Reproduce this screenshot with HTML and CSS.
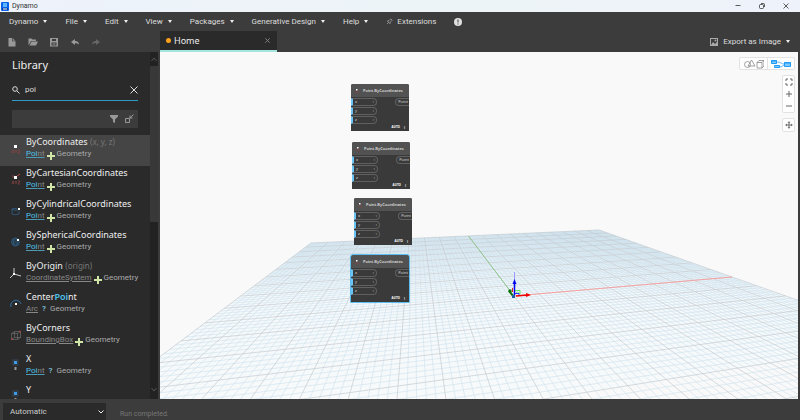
FILE: index.html
```html
<!DOCTYPE html>
<html lang="en">
<head>
  <meta charset="UTF-8">
  <meta name="viewport" content="width=device-width, initial-scale=1.0">
  <title>Dynamo</title>
  <link rel="stylesheet" href="styles.css">
</head>
<body>
  <!-- Shared icons -->
  <svg class="sprite" aria-hidden="true">
    <symbol id="dots" viewBox="0 0 12 16">
      <rect x="4" y="4" width="3" height="3" fill="#fff"/>
      <path d="M2 9l2 3M4 9l-2 3M5 9l1 1.500 1-1.500M6 10v2M8 9h2l-2 3h2" stroke="#8a4442" stroke-width=".800" fill="none"/>
    </symbol>
    <symbol id="pin" viewBox="0 0 12 16">
      <rect x="4" y="3" width="3" height="3" fill="#3f9bea"/>
      <rect x="3" y="2" width="5" height="5" fill="none" stroke="#36495a"/>
      <path d="M5.500 9v3" stroke="#999" stroke-width="2"/>
    </symbol>
  </svg>

  <div class="app">
    <header class="titlebar">
      <svg class="logo" viewBox="0 0 8 9"><rect width="8" height="9" rx="1" fill="#0b62e8"/><rect x="2" y="1" width="4" height="4" fill="#5db4ff"/><path d="M1 6h6v2H1z" fill="#063c9c"/><path d="M2 7h4" stroke="#fff"/></svg>
      <span class="title">Dynamo</span>
      <div class="window-buttons">
        <button aria-label="Minimize"><svg viewBox="0 0 8 8"><path d="M1.500 3.500h5" /></svg></button>
        <button aria-label="Restore"><svg viewBox="0 0 8 8"><rect x="1.500" y="2.500" width="4" height="4" rx="1"/><path d="M3 1.500h2.500q1 0 1 1V5"/></svg></button>
        <button aria-label="Close"><svg viewBox="0 0 8 8"><path d="M1.500 1.500l5 5M6.500 1.500l-5 5"/></svg></button>
      </div>
    </header>

    <nav class="menu">
      <button class="drop">Dynamo</button>
      <button class="drop">File</button>
      <button class="drop">Edit</button>
      <button class="drop">View</button>
      <button class="drop">Packages</button>
      <button class="drop">Generative Design</button>
      <button class="drop">Help</button>
      <button class="extensions"><svg viewBox="0 0 8 8"><path d="M1 7l2-2M1.500 3.500l3 3 .500-2 2-2-1.500-1.500-2 2z"/></svg>Extensions</button>
      <button class="alert" aria-label="Notifications"><svg viewBox="0 0 8 8"><circle cx="4" cy="4" r="4"/><path d="M4 1.500v3M4 5.500v1" stroke="#3c3c3c"/></svg></button>
    </nav>

    <div class="toolbar">
      <div class="tools">
        <button aria-label="New"><svg viewBox="0 0 10 10"><path d="M1.500 1h4l3 3v5.500h-7z"/><path d="M5.500 1v3h3" stroke="#3c3c3c" stroke-width=".700" fill="none"/></svg></button>
        <button aria-label="Open"><svg viewBox="0 0 10 10"><path d="M.500 8.500v-7h3l1 1h3.500v1.500H3z"/><path d="M1.500 8.500l2-4h6.500l-2 4z"/></svg></button>
        <button aria-label="Save"><svg viewBox="0 0 10 10"><path fill-rule="evenodd" d="M1 1h8v8.500H1zM3 2v2h4V2zM2.500 5.500v3h5v-3z"/><path d="M3.500 6.500h3v1h-3z"/></svg></button>
        <button aria-label="Undo"><svg viewBox="0 0 10 10"><path d="M1 5l4-3v2q4 0 4 3.500Q8 6 5 6v2z"/></svg></button>
        <button aria-label="Redo" disabled><svg viewBox="0 0 10 10"><path d="M9 5L5 2v2Q1 4 1 7.500 2 6 5 6v2z"/></svg></button>
      </div>
      <div class="tab">
        <span class="unsaved"></span>
        <span class="tab-name">Home</span>
        <button aria-label="Close tab"><svg viewBox="0 0 8 8"><path d="M1.500 1.500l5 5M6.500 1.500l-5 5"/></svg></button>
      </div>
      <button class="export drop"><svg viewBox="0 0 8 8"><path fill-rule="evenodd" d="M0 0h8v8H0zM1 1v6l2-3 2 2 2-2V1z"/><circle cx="5.500" cy="2.500" r="1"/></svg>Export as Image</button>
    </div>

    <main class="body">
      <aside class="library">
        <div class="library-panel">
          <h1>Library</h1>
          <div class="search">
            <svg viewBox="0 0 8 8"><circle cx="3" cy="3" r="2.300"/><path d="M5 5l2.500 2.500"/></svg>
            <input type="text" value="poi" aria-label="Search library">
            <button aria-label="Clear search"><svg viewBox="0 0 8 8"><path d="M.500 .500l7 7M7.500 .500l-7 7"/></svg></button>
          </div>
          <div class="filters">
            <button aria-label="Filter"><svg viewBox="0 0 10 10"><path d="M1 1h8v1.500L6 5.500V9L4 8V5.500L1 2.500z" fill="#999"/></svg></button>
            <button aria-label="Detail view"><svg viewBox="0 0 10 10"><path d="M1.500 4.500h4v4h-4zM9.500 .500L6 4M6 1.500V4h2.500" fill="none" stroke="#999"/></svg></button>
          </div>
          <ul class="results">
            <li class="selected">
              <svg viewBox="0 0 12 16"><use href="#dots"/></svg>
              <div><h2>ByCoordinates <small>(x, y, z)</small></h2><p><a href="#"><b>Poi</b>nt</a><i class="create"></i>Geometry</p></div>
            </li>
            <li>
              <svg viewBox="0 0 12 16"><use href="#dots"/><path d="M7 4l3-2" stroke="#c34a44"/><path d="M3 6V3" stroke="#8a4442"/></svg>
              <div><h2>ByCartesianCoordinates</h2><p><a href="#"><b>Poi</b>nt</a><i class="create"></i>Geometry</p></div>
            </li>
            <li>
              <svg viewBox="0 0 12 16"><path d="M2 6v5q3.500 1.500 7 0V8M2 6q3-1.500 5 0M2 6q3 2 6 1" fill="none" stroke="#2c618c" stroke-width=".800"/><rect x="8" y="5" width="2" height="2" fill="#fff"/></svg>
              <div><h2>ByCylindricalCoordinates</h2><p><a href="#"><b>Poi</b>nt</a><i class="create"></i>Geometry</p></div>
            </li>
            <li>
              <svg viewBox="0 0 12 16"><g fill="none" stroke="#2c618c" stroke-width=".700"><circle cx="5.500" cy="8" r="4"/><ellipse cx="5.500" cy="8" rx="2" ry="4"/><path d="M1.500 8h8M2 6h7M2 10h7"/></g><rect x="7" y="5" width="2" height="2" fill="#fff"/></svg>
              <div><h2>BySphericalCoordinates</h2><p><a href="#"><b>Poi</b>nt</a><i class="create"></i>Geometry</p></div>
            </li>
            <li>
              <svg viewBox="0 0 12 16"><path d="M4 3v6l7 2M4 9l-4 4" fill="none" stroke="#ccc"/><rect x="3" y="8" width="2" height="2" fill="#fff"/></svg>
              <div><h2>ByOrigin <small>(origin)</small></h2><p><a href="#">CoordinateSystem</a><i class="create"></i>Geometry</p></div>
            </li>
            <li>
              <svg viewBox="0 0 12 16"><path d="M1 11A5 5 0 1 1 11 8" fill="none" stroke="#2f71a6"/><rect x="5" y="7" width="2" height="2" fill="#fff"/></svg>
              <div><h2>Center<b>Poi</b>nt</h2><p><a href="#">Arc</a><i class="query">?</i>Geometry</p></div>
            </li>
            <li>
              <svg viewBox="0 0 12 16"><path d="M1.500 6.500h6v6h-6zM4.500 4.500h6v6h-6zM1.500 6.500l3-2M7.500 6.500l3-2M7.500 12.500l3-2M1.500 12.500l3-2" fill="none" stroke="#666" stroke-width=".800"/><path d="M1 12h2M9 4.500h2" stroke="#a04644" stroke-width="1.500"/></svg>
              <div><h2>ByCorners</h2><p><a href="#">BoundingBox</a><i class="create"></i>Geometry</p></div>
            </li>
            <li>
              <svg viewBox="0 0 12 16"><use href="#pin"/></svg>
              <div><h2>X</h2><p><a href="#"><b>Poi</b>nt</a><i class="query">?</i>Geometry</p></div>
            </li>
            <li>
              <svg viewBox="0 0 12 16"><use href="#pin"/></svg>
              <div><h2>Y</h2><p><a href="#"><b>Poi</b>nt</a><i class="query">?</i>Geometry</p></div>
            </li>
          </ul>
        </div>
        <div class="scrollbar">
          <svg viewBox="0 0 8 14"><path d="M1.500 9L4 6l2.500 3"/></svg>
          <span class="thumb"></span>
          <svg viewBox="0 0 8 14"><path d="M1.500 3L4 6l2.500-3"/></svg>
        </div>
      </aside>

      <section class="workspace">
        <svg class="grid" viewBox="160 52 638 347" preserveAspectRatio="xMinYMin slice">
          <defs>
            <linearGradient id="fade" x1="0" y1="0" x2="0" y2="1">
              <stop offset="0" stop-color="#e3eef5"/>
              <stop offset=".250" stop-color="#f5f9fb"/>
              <stop offset="1" stop-color="#f9fafa"/>
            </linearGradient>
          </defs>
          <path fill="url(#fade)" id="floor"/>
          <path class="minor" id="minor"/>
          <path class="major" id="major"/>
          <path d="M514 296L468.500 236" stroke="#8cc48c"/>
          <path d="M514 296L732 277" stroke="#f5a3a3"/>
          <path d="M514.500 272v10" stroke="#9a9aff"/>
          <path d="M514.500 295v-12" stroke="#0000f0" stroke-width="1.500"/>
          <path d="M512.500 284l2-5 2 5z" fill="#0000f0"/>
          <path d="M515 290.500h5v4M516 293h3" fill="none" stroke="#58e858"/>
          <path d="M515 293.500h4v2" fill="none" stroke="#3030ff"/>
          <path d="M512.500 288v4" stroke="#e02020"/>
          <path d="M516 296l12-1" stroke="#f00000" stroke-width="1.500"/>
          <path d="M526 293l5 2-5 2z" fill="#f00000"/>
          <path d="M513 296l-4-5" stroke="#087008" stroke-width="2"/>
          <circle cx="510" cy="291" r="1.700" fill="#087008"/>
          <rect x="512" y="295" width="3" height="3" fill="#1b60a8"/>
        </svg>

        <article class="node node-1">
          <h3><svg viewBox="0 0 12 16"><use href="#dots"/></svg>Point.ByCoordinates</h3>
          <div class="ports"><ul><li>x<span>›</span></li><li>y<span>›</span></li><li>z<span>›</span></li></ul><span class="out">Point</span></div>
          <footer>AUTO<span>⋮</span></footer>
        </article>
        <article class="node node-2">
          <h3><svg viewBox="0 0 12 16"><use href="#dots"/></svg>Point.ByCoordinates</h3>
          <div class="ports"><ul><li>x<span>›</span></li><li>y<span>›</span></li><li>z<span>›</span></li></ul><span class="out">Point</span></div>
          <footer>AUTO<span>⋮</span></footer>
        </article>
        <article class="node node-3">
          <h3><svg viewBox="0 0 12 16"><use href="#dots"/></svg>Point.ByCoordinates</h3>
          <div class="ports"><ul><li>x<span>›</span></li><li>y<span>›</span></li><li>z<span>›</span></li></ul><span class="out">Point</span></div>
          <footer>AUTO<span>⋮</span></footer>
        </article>
        <article class="node node-4 active">
          <h3><svg viewBox="0 0 12 16"><use href="#dots"/></svg>Point.ByCoordinates</h3>
          <div class="ports"><ul><li>x<span>›</span></li><li>y<span>›</span></li><li>z<span>›</span></li></ul><span class="out">Point</span></div>
          <footer>AUTO<span>⋮</span></footer>
        </article>

        <div class="view-controls">
          <div class="view-switch">
            <button aria-label="Geometry view"><svg viewBox="0 0 20 10"><g fill="none" stroke="#888" stroke-width=".800"><circle cx="3.500" cy="5.500" r="3"/><path d="M4 7l3.500-6 3.500 6zM13 3.500h5V9h-5zM13 3.500L15 1.500h5V7l-2 2M18 3.500l2-2"/></g></svg></button>
            <button aria-label="Graph view"><svg viewBox="0 0 20 10"><g fill="#7cc8ff" stroke="#1f9bf5"><path d="M.500 1.500h5v3h-5zM13.500 3.500h6v4h-6zM3.500 6.500h5v2h-5z"/><path d="M6 3q3 0 4 1t3 1M9 8q2 0 4-2" fill="none" stroke-width=".700"/></g><path d="M0 2h6M13 4h7" stroke="#1f9bf5"/></svg></button>
          </div>
          <div class="zoom">
            <button aria-label="Fit"><svg viewBox="0 0 8 8"><path d="M1 3V1h2M5 1h2v2M7 5v2H5M3 7H1V5"/></svg></button>
            <button aria-label="Zoom in"><svg viewBox="0 0 8 8"><path d="M4 1v6M1 4h6"/></svg></button>
            <button aria-label="Zoom out"><svg viewBox="0 0 8 8"><path d="M1 4h6"/></svg></button>
          </div>
          <div class="zoom">
            <button aria-label="Pan"><svg viewBox="0 0 8 8"><path d="M4 1v6M1 4h6"/><path d="M2.500 1.800L4 .200l1.500 1.600zM2.500 6.200L4 7.800l1.500-1.600zM1.800 2.500L.200 4l1.600 1.500zM6.200 2.500L7.800 4 6.200 5.500z" class="tips"/></svg></button>
          </div>
        </div>
      </section>
    </main>

    <footer class="statusbar">
      <div class="run-mode">
        <select aria-label="Run mode"><option>Automatic</option><option>Manual</option></select>
        <svg viewBox="0 0 8 8"><path d="M1.500 2.500L4 5l2.500-2.500"/></svg>
      </div>
      <span>Run completed.</span>
    </footer>
  </div>

  <script src="grid.js"></script>
</body>
</html>
```

FILE: grid.js
```js
// Perspective projection of the floor plane, u and v run from -1 to 1
function project(u, v) {
  const w = 0.1728 * u + 0.8465 * v + 1;
  const x = (344.5 * u + 351.1 * v + 514) / w;
  const y = (28.87 * u + 139.6 * v + 296) / w;
  return x.toFixed(1) + ' ' + y.toFixed(1);
}

const NEAR = -0.76;
let minor = '';
let major = '';

for (let i = -50; i <= 50; i++) {
  const t = i / 50;
  let d = 'M' + project(t, NEAR) + 'L' + project(t, 1);
  if (t >= NEAR) {
    d += 'M' + project(-1, t) + 'L' + project(1, t);
  }
  if (i % 5 === 0) {
    major += d;
  } else {
    minor += d;
  }
}

document.getElementById('minor').setAttribute('d', minor);
document.getElementById('major').setAttribute('d', major);
document.getElementById('floor').setAttribute('d',
  'M' + project(-1, -0.5) + 'L' + project(-1, 1) + 'L' + project(1, 1) + 'L' + project(1, -0.5) + 'Z');
```

FILE: styles.css
```css
* {
  margin: 0;
  padding: 0;
  box-sizing: border-box;
}

body {
  font-family: Roboto, "Noto Sans", sans-serif;
  font-size: 8px;
  line-height: 12px;
  background: #3c3c3c;
  color: #ddd;
}

button {
  font: inherit;
  color: inherit;
  background: none;
  border: none;
  display: flex;
  align-items: center;
}

svg {
  display: block;
  flex: none;
}

ul {
  list-style: none;
}

.sprite {
  position: absolute;
  width: 0;
  height: 0;
}

.app {
  height: 100vh;
  display: flex;
  flex-direction: column;
}

/* Title bar */
.titlebar {
  display: flex;
  align-items: center;
  height: 12px;
  padding-left: 1px;
  background: linear-gradient(90deg, #edf2fb, #edf4f7 60%, #eef2fb);
  color: #333;
  font-size: 7px;
}

.logo {
  width: 8px;
  height: 9px;
  margin-right: 3px;
}

.window-buttons {
  display: flex;
  gap: 16px;
  margin-left: auto;
  padding-right: 10px;
}

.window-buttons svg {
  width: 8px;
  height: 8px;
  fill: none;
  stroke: #333;
  stroke-width: .8;
}

/* Menu */
.menu {
  display: flex;
  align-items: center;
  gap: 18px;
  height: 19px;
  padding-left: 9px;
}

.drop::after {
  content: "";
  margin-left: 5px;
  border: 2px solid transparent;
  border-top: 3px solid #eee;
  border-bottom: 0;
}

.extensions svg {
  width: 7px;
  height: 7px;
  margin-right: 4px;
  fill: none;
  stroke: #999;
}

.alert svg {
  width: 8px;
  height: 8px;
  fill: #e0e0e0;
}

/* Toolbar and tabs */
.toolbar {
  display: flex;
  height: 21px;
}

.tools {
  display: flex;
  gap: 11px;
  width: 160px;
  padding-left: 7px;
}

.tools svg {
  width: 10px;
  height: 10px;
  fill: #999;
}

.tools button:disabled svg {
  fill: #666;
}

.tab {
  display: flex;
  align-items: center;
  width: 117px;
  padding: 0 6px;
  background: #2a2a2a;
  border-bottom: 2px solid #a5e5e0;
}

.unsaved {
  width: 5px;
  height: 5px;
  margin-right: 3px;
  border-radius: 50%;
  background: #ffa21a;
}

.tab-name,
.library h1,
.results h2 {
  font-family: "Noto Sans", sans-serif;
  font-weight: 400;
  color: #eee;
}

.tab-name {
  font-size: 9px;
}

.tab button {
  margin-left: auto;
}

.tab svg {
  width: 7px;
  height: 7px;
  stroke: #888;
}

.export {
  margin-left: auto;
  margin-right: 10px;
}

.export svg {
  width: 8px;
  height: 8px;
  margin-right: 5px;
  fill: #aaa;
}

/* Library */
.body {
  flex: 1;
  display: flex;
  min-height: 0;
}

.library {
  display: flex;
  width: 158px;
  margin-right: 2px;
  background: #2a2a2a;
}

.library-panel {
  flex: 1;
  min-width: 0;
  display: flex;
  flex-direction: column;
}

.library h1 {
  margin: 5px 12px 0;
  font-size: 11px;
  line-height: 16px;
}

.search {
  display: flex;
  align-items: center;
  height: 21px;
  margin: 7px 12px 9px;
  border-bottom: 1px solid #2f9ac4;
}

.search svg {
  width: 8px;
  height: 8px;
  fill: none;
  stroke: #ddd;
}

.search input {
  flex: 1;
  min-width: 0;
  margin-left: 5px;
  background: none;
  border: none;
  outline: none;
  font: inherit;
  color: #ddd;
}

.filters {
  display: flex;
  justify-content: flex-end;
  gap: 5px;
  height: 18px;
  margin: 0 12px 7px;
  padding-right: 4px;
  background: #3c3c3c;
}

.filters svg {
  width: 10px;
  height: 10px;
}

.results {
  flex: 1;
  overflow: hidden;
}

.results li {
  display: flex;
  height: 31px;
  padding-left: 10px;
}

.results li > svg {
  width: 12px;
  height: 16px;
  margin: 6px 4px 0 0;
}

.results .selected {
  background: #454545;
}

.results h2 {
  font-size: 9px;
  line-height: 13px;
  white-space: nowrap;
}

.results small {
  font-size: 8px;
  color: #777;
}

.results b {
  font-weight: 400;
  color: #4cc2ea;
}

.results h2 b {
  font-weight: 600;
}

.results p {
  display: flex;
  align-items: center;
  line-height: 12px;
  color: #aaa;
}

.results a {
  color: #888;
}

.results a:has(b) {
  text-decoration-color: #4f9ab5;
}

.create {
  width: 8px;
  height: 8px;
  margin: 3px 2px 0;
  background:
    linear-gradient(#cfe6a8, #cfe6a8) center / 8px 2px no-repeat,
    linear-gradient(#cfe6a8, #cfe6a8) center / 2px 8px no-repeat;
}

.query {
  width: 12px;
  text-align: center;
  font-style: normal;
  font-weight: 600;
  color: #7cc0dc;
}

.scrollbar {
  display: flex;
  flex-direction: column;
  width: 8px;
  background: #222;
}

.scrollbar svg {
  width: 8px;
  height: 14px;
  fill: none;
  stroke: #555;
}

.scrollbar .thumb {
  height: 45%;
  margin-bottom: auto;
  background: #383838;
}

/* Workspace */
.workspace {
  flex: 1;
  position: relative;
  overflow: hidden;
  margin-right: 2px;
  background: #f9f9f9;
}

.grid {
  width: 100%;
  height: 100%;
}

.minor {
  fill: none;
  stroke: #cde1ed;
  stroke-width: .6;
}

.major {
  fill: none;
  stroke: #c3ccd1;
  stroke-width: .7;
}

/* Nodes */
.node {
  position: absolute;
  width: 58px;
  height: 47px;
  background: #3a3a3a;
  border-radius: 2px 2px 0 0;
  color: #ddd;
  font-family: "Noto Sans", sans-serif;
  font-size: 4px;
  line-height: 6px;
}

.node-1 {
  left: 191px;
  top: 32px;
}

.node-2 {
  left: 192px;
  top: 90px;
}

.node-3 {
  left: 194px;
  top: 146px;
}

.node-4 {
  left: 191px;
  top: 203px;
}

.node.active {
  outline: 1px solid #5bbdf0;
}

.node h3 {
  display: flex;
  align-items: center;
  height: 13px;
  padding-left: 3px;
  border-radius: 2px 2px 0 0;
  background: #525252;
  font-size: 4px;
  font-weight: 600;
}

.node h3 svg {
  width: 6px;
  height: 8px;
  margin-right: 3px;
}

.ports {
  display: flex;
  justify-content: space-between;
  padding-top: 1px;
}

.ports ul {
  display: grid;
  gap: 1px;
}

.ports li {
  display: flex;
  justify-content: space-between;
  width: 26px;
  height: 8px;
  padding: 0 2px;
  border: 1px solid #606060;
  border-left: 2px solid #6cc5f5;
  border-radius: 0 4px 4px 0;
}

.out {
  height: 8px;
  padding: 0 1px 0 2px;
  border: 1px solid #606060;
  border-right: none;
  border-radius: 4px 0 0 4px;
}

.node footer {
  display: flex;
  justify-content: flex-end;
  gap: 3px;
  padding-right: 3px;
  font-size: 3px;
  font-weight: 700;
  color: #fff;
}

/* View controls */
.view-controls {
  position: absolute;
  top: 5px;
  right: 3px;
  display: flex;
  flex-direction: column;
  align-items: flex-end;
  gap: 5px;
}

.view-switch,
.zoom {
  display: flex;
  background: #fff;
  border: 1px solid #e2e2e2;
  border-radius: 2px;
}

.view-switch button {
  width: 27px;
  height: 11px;
  justify-content: center;
}

.view-switch button + button {
  border-left: 1px solid #e2e2e2;
}

.view-switch svg {
  width: 20px;
  height: 10px;
}

.zoom {
  flex-direction: column;
}

.zoom button {
  width: 11px;
  height: 12px;
  justify-content: center;
}

.zoom svg {
  width: 8px;
  height: 8px;
  fill: none;
  stroke: #666;
}

.zoom .tips {
  fill: #666;
  stroke: none;
}

/* Status bar */
.statusbar {
  display: flex;
  align-items: flex-end;
  gap: 14px;
  height: 21px;
  padding-left: 3px;
  color: #777;
  font-size: 7px;
}

.run-mode {
  position: relative;
}

.run-mode svg {
  position: absolute;
  top: 5px;
  right: 1px;
  width: 8px;
  height: 8px;
  fill: none;
  stroke: #eee;
}

.statusbar select {
  display: block;
  appearance: none;
  width: 103px;
  height: 17px;
  padding: 0 7px;
  border: none;
  font: inherit;
  font-size: 8px;
  color: #ccc;
  background: #2a2a2a;
}
```
